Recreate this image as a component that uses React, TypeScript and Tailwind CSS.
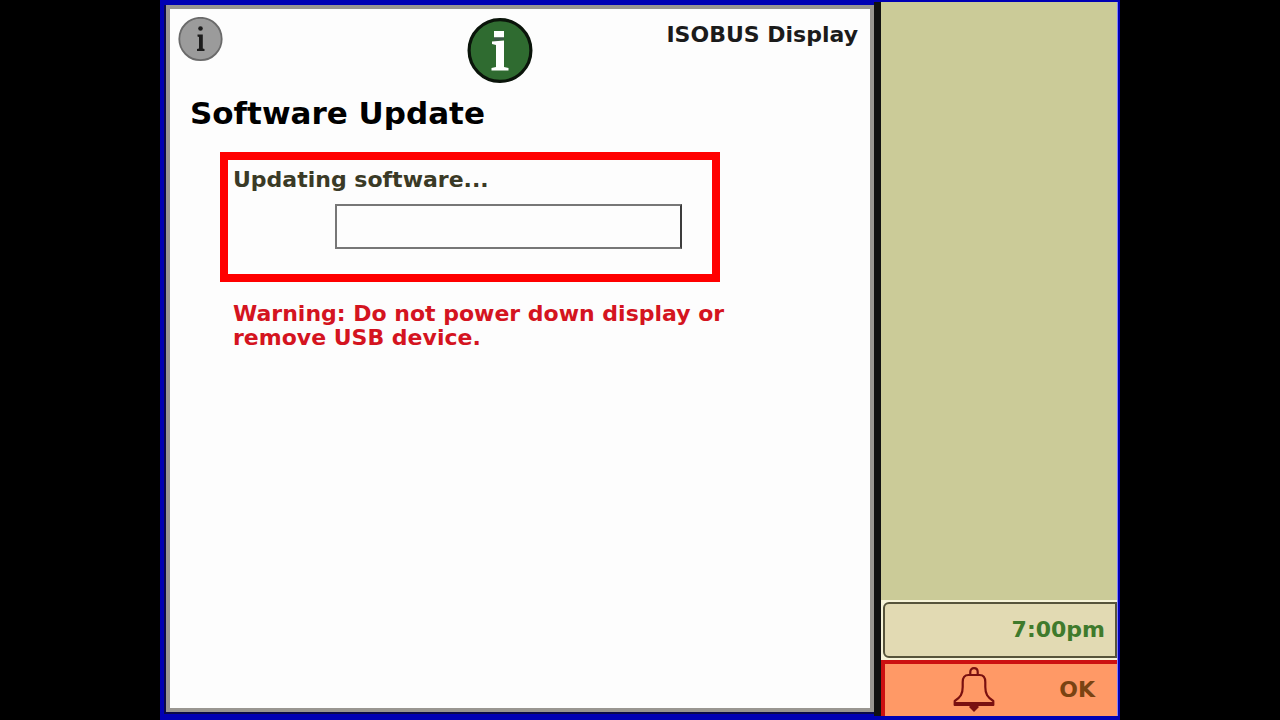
const InfoBadge = () => (
  <svg viewBox="0 0 46 46" className="h-[46px] w-[46px]" aria-hidden="true">
    <circle cx="22.5" cy="22" r="21.2" fill="#9b9b9b" stroke="#6a6a6a" strokeWidth="1.8" />
    <circle cx="22.5" cy="11.5" r="2.3" fill="#1c1c1c" />
    <path d="M19.5 17.5H24.8V31.5L26.5 32V34H19V32L21 31.5V20L19.5 19.5Z" fill="#1c1c1c" />
  </svg>
);

const InfoEmblem = () => (
  <svg viewBox="0 0 66 66" className="h-[66px] w-[66px]" aria-hidden="true">
    <circle cx="33" cy="33.5" r="30.9" fill="#2f6b30" stroke="#0a140a" strokeWidth="3.2" />
    <path d="M27 14H37V20.5H27Z" fill="#fff" />
    <path d="M27 20.5H37V22.5L27 24Z" fill="#3d5548" />
    <path d="M25 24.5L37 23.5V50L41.5 51V53.5H24.5V51L29 50V28L25 27Z" fill="#fff" />
  </svg>
);

const AlarmBell = () => (
  <svg
    viewBox="0 0 42 46"
    className="h-[46px] w-[42px]"
    fill="none"
    stroke="#7a1010"
    strokeWidth="2.2"
    strokeLinejoin="round"
    aria-hidden="true"
  >
    <path d="M17.3 8.5V5C17.3 2.8 18.8 1.2 21 1.2S24.7 2.8 24.7 5V8.5" />
    <path d="M15.5 8H26.5C30.5 8 32.3 11 32.3 15V20C32.3 27 34.5 30.5 40.3 34V38H1.7V34C7.5 30.5 9.7 27 9.7 20V15C9.7 11 11.5 8 15.5 8Z" />
    <path d="M1.5 36.8H40.5" strokeWidth="3.4" />
    <path d="M16.5 38H25.5V40.5L21 45L16.5 40.5Z" fill="#7a1010" stroke="none" />
  </svg>
);

const UpdatePanel = () => (
  <main className="min-w-0 flex-1 border-4 border-[#999691] bg-[#fdfdfd] pb-8">
    <header className="flex items-start pt-2 pr-3 pl-2">
      <InfoBadge />
      <div className="ml-[243px]">
        <InfoEmblem />
      </div>
      <p className="ml-auto pt-0.5 text-[22px] leading-8 font-bold whitespace-nowrap text-[#1b1b1b]">
        ISOBUS Display
      </p>
    </header>

    <h1 className="mt-3 pl-5 text-[31px] leading-9 font-bold text-black">
      Software Update
    </h1>

    <section className="mt-[21px] mr-[150px] ml-[50px] h-[130px] border-8 border-[#ff0000] pt-2 pr-[30px] pl-[5px]">
      <label htmlFor="update-progress" className="block text-[22px] leading-6 font-bold text-[#3a3a26]">
        Updating software...
      </label>
      <progress
        id="update-progress"
        value={0}
        max={100}
        className="mt-3 ml-auto block h-[45px] w-[347px] appearance-none border-2 border-[#777] border-r-[#3c3c3c] bg-[#fdfdfd] [&::-webkit-progress-bar]:bg-[#fdfdfd]"
      />
    </section>

    <p
      role="alert"
      className="mt-5 mr-[130px] ml-[63px] text-[22px] leading-6 font-bold text-[#d41420]"
    >
      Warning: Do not power down display or remove USB device.
    </p>
  </main>
);

const Sidebar = () => (
  <aside className="flex w-[236px] shrink-0 flex-col bg-[#cbcb98]">
    <div className="mt-auto bg-[#f6f3d8] pt-0.5 pb-0.5 pl-0.5">
      <div className="flex h-14 items-center justify-end rounded-l-md border-2 border-[#56533a] bg-[#e2dab3] pr-2.5">
        <time dateTime="19:00" className="text-[22px] leading-8 font-bold text-[#3f7a2c]">
          7:00pm
        </time>
      </div>
    </div>
    <button
      type="button"
      className="flex h-14 items-center justify-between border-t-4 border-l-4 border-[#cc1111] bg-[#ff9966] pr-[22px] pl-[68px]"
    >
      <AlarmBell />
      <span className="text-[22px] leading-8 font-bold text-[#7a4312]">OK</span>
    </button>
  </aside>
);

export default function App() {
  return (
    <div className="flex min-h-screen justify-center bg-black font-['DejaVu_Sans',sans-serif]">
      <div className="flex w-3/4 bg-[#0000b4] pr-0.5">
        <div className="flex min-w-0 flex-1 border-t-2 border-[#0000b4] pb-1">
          <div className="flex min-w-0 flex-1 pt-[3px] pb-0.5 pl-1">
            <div className="flex min-w-0 flex-1 border-b-2 border-l-2 border-[#0a0a4a]">
              <UpdatePanel />
            </div>
          </div>
          <div className="w-[7px] shrink-0 bg-[#111]" />
          <div className="flex border-r border-[#8080ff]">
            <Sidebar />
          </div>
        </div>
      </div>
    </div>
  );
}
